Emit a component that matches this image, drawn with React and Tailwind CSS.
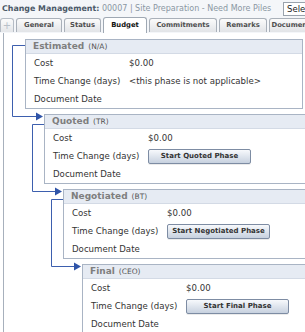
import React from 'react';

const FONT = { fontFamily: '"DejaVu Sans", Verdana, sans-serif' };

const tabs = [
  { label: 'General', w: 'w-[46px]' },
  { label: 'Status', w: 'w-[37px]' },
  { label: 'Budget', w: 'w-[44px]', active: true },
  { label: 'Commitments', w: 'w-[68px]' },
  { label: 'Remarks', w: 'w-[48px]' },
  { label: 'Documents', w: 'w-[48px]' },
];

const phases = [
  { name: 'Estimated', code: '(N/A)', indent: 'ml-[21px]', time: null },
  { name: 'Quoted', code: '(TR)', indent: 'ml-[40px]', time: 'Start Quoted Phase' },
  { name: 'Negotiated', code: '(BT)', indent: 'ml-[59px]', time: 'Start Negotiated Phase' },
  { name: 'Final', code: '(CEO)', indent: 'ml-[78px]', time: 'Start Final Phase' },
];

function Row({ label, children }) {
  return (
    <div className="flex items-center h-[18px] text-[8.6px] text-[#333]">
      <div className="w-[103px] pl-[8px] shrink-0">{label}</div>
      <div className="whitespace-nowrap">{children}</div>
    </div>
  );
}

function Phase({ phase }) {
  return (
    <div className={`${phase.indent} w-[278px] shrink-0 border border-[#a9b4c4] bg-white`}>
      <div className="h-[14px] flex items-center pl-[7px] bg-[#e6ebf3] border-b border-[#d3dae5] whitespace-nowrap">
        <span className="text-[9px] font-bold text-[#7e7e7e]">{phase.name}</span>
        <span className="ml-[4px] text-[7.5px] text-[#555]">{phase.code}</span>
      </div>
      <Row label="Cost">$0.00</Row>
      <Row label="Time Change (days)">
        {phase.time ? (
          <button className="w-[103px] h-[15px] flex items-center justify-center border border-[#7d8ca3] rounded-[2px] bg-gradient-to-b from-[#f7f9fc] to-[#c7d1df] text-[7px] font-bold text-[#333] shadow-[0_1px_0_rgba(0,0,0,0.08)]">
            {phase.time}
          </button>
        ) : (
          <span>&lt;this phase is not applicable&gt;</span>
        )}
      </Row>
      <Row label="Document Date" />
    </div>
  );
}

export default function App() {
  return (
    <div className="relative w-[305px] h-[332px] overflow-hidden bg-white" style={FONT}>
      {/* title bar */}
      <div className="h-[17px] flex items-center bg-[#f4f6f9] whitespace-nowrap">
        <div className="w-[283px] shrink-0 pl-[2px] text-[8px] text-[#8a96a3]">
          <span className="font-bold text-[#4b5968] text-[7.9px]">Change Management:</span> 00007 | Site Preparation - Need More Piles
        </div>
        <div className="w-[40px] h-[14px] shrink-0 border border-[#9aa3ad] bg-white pl-[3px] text-[8.5px] text-[#222] leading-[12px]">
          Select
        </div>
      </div>

      {/* tabs */}
      <div className="relative z-10 -mb-px h-[16px] flex items-end gap-[2px] bg-[#f4f6f9] whitespace-nowrap">
        <div className="w-[14px] h-[14px] mb-px shrink-0 flex items-center justify-center border border-b-0 border-[#b5bcc5] rounded-t-[3px] bg-gradient-to-b from-[#fbfbfb] to-[#e4e6e9] text-[10px] leading-none text-[#b8c0c8]">
          +
        </div>
        {tabs.map(t =>
          t.active ? (
            <div key={t.label} className={`${t.w} h-[16px] shrink-0 flex items-center justify-center border border-b-0 border-[#9fa8b3] rounded-t-[3px] bg-white text-[6.8px] font-bold text-[#111]`}>
              {t.label}
            </div>
          ) : (
            <div key={t.label} className={`${t.w} h-[14px] mb-px shrink-0 flex items-center justify-center overflow-hidden border border-b-0 border-[#a9b0b9] rounded-t-[3px] bg-gradient-to-b from-[#fbfbfb] to-[#e2e4e7] text-[6.8px] font-bold text-[#4f4f4f]`}>
              {t.label}
            </div>
          )
        )}
      </div>

      {/* panel */}
      <div className="ml-[3px] h-[320px] border-t border-l border-[#a7b0bc] pt-[6px] flex flex-col gap-[5px]">
        {phases.map(p => <Phase key={p.name} phase={p} />)}
      </div>

      {/* workflow connectors */}
      <svg className="absolute top-0 left-0 pointer-events-none" width="305" height="332" viewBox="0 0 305 332">
        <g stroke="#3d5fae" strokeWidth="1" fill="none">
          <path d="M25 45.5 H12.5 V116.5 H37" />
          <path d="M44 124.5 H32.5 V191.5 H56" />
          <path d="M63 199.5 H51.5 V266.5 H75" />
        </g>
        <g fill="#2f54a8">
          <polygon points="36,112.5 43,116.5 36,120.5" />
          <polygon points="55,187.5 62,191.5 55,195.5" />
          <polygon points="74,262.5 81,266.5 74,270.5" />
        </g>
      </svg>
    </div>
  );
}
